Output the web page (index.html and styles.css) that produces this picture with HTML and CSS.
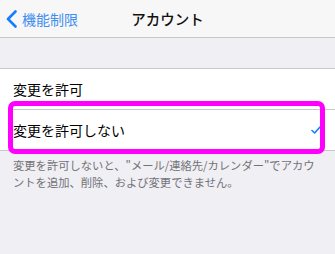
FILE: index.html
```html
<!DOCTYPE html>
<html lang="ja">
<head>
    <meta charset="UTF-8">
    <meta name="viewport" content="width=device-width, initial-scale=1.0">
    <title>アカウント</title>
    <link rel="stylesheet" href="styles.css">
</head>
<body>
    <div class="navbar">
        <a class="back" href="#">
            <svg class="chevron" width="11" height="18" viewBox="0 0 11 18">
                <path d="M9.5 1.5 L2 9 L9.5 16.5" fill="none" stroke="#157efb" stroke-width="2.6" stroke-linecap="round" stroke-linejoin="round"/>
            </svg>
            <span>機能制限</span>
        </a>
        <div class="title">アカウント</div>
    </div>

    <div class="group">
        <div class="cell">変更を許可</div>
        <div class="cell selected">
            <span>変更を許可しない</span>
            <svg class="check" width="10" height="8" viewBox="0 0 10 8">
                <path d="M1 4.5 L3.6 7 L9 1" fill="none" stroke="#157efb" stroke-width="1.6" stroke-linecap="round" stroke-linejoin="round"/>
            </svg>
        </div>
    </div>
    <p class="footer">変更を許可しないと、"メール/連絡先/カレンダー"でアカウントを追加、削除、および変更できません。</p>
</body>
</html>
```

FILE: styles.css
```css
body {
    margin: 0;
    background: #efeff4;
    font-family: "Noto Sans CJK JP", "Noto Sans", sans-serif;
    color: #000;
}
.navbar {
    position: relative;
    height: 37px;
    background: #f7f7f8;
    border-bottom: 1px solid #c8c7cc;
    display: flex;
    align-items: center;
    justify-content: center;
}
.back {
    position: absolute;
    left: 6px;
    top: 0;
    height: 37px;
    display: flex;
    align-items: center;
    gap: 5px;
    color: #3f8ef0;
    text-decoration: none;
    font-size: 14px;
}
.title {
    font-size: 14.5px;
    font-weight: 500;
    color: #111;
}
.group {
    margin-top: 30px;
    background: #fff;
    border-top: 1px solid #c8c7cc;
    border-bottom: 1px solid #c8c7cc;
}
.cell {
    position: relative;
    height: 40px;
    display: flex;
    align-items: center;
    justify-content: space-between;
    padding: 0 13px 0 13px;
    font-size: 14px;
}
.cell + .cell {
    border-top: 1px solid #c8c7cc;
    margin-left: 13px;
    padding-left: 0;
}
.selected::after {
    content: "";
    position: absolute;
    left: -5px;
    right: 10px;
    top: -9px;
    bottom: -4px;
    border: 5px solid #ff00ff;
    border-radius: 7px;
}
.check {
    margin-right: 1px;
}
.footer {
    margin: 6px 13px 0;
    font-size: 11.3px;
    line-height: 17px;
    color: #727277;
}
```
